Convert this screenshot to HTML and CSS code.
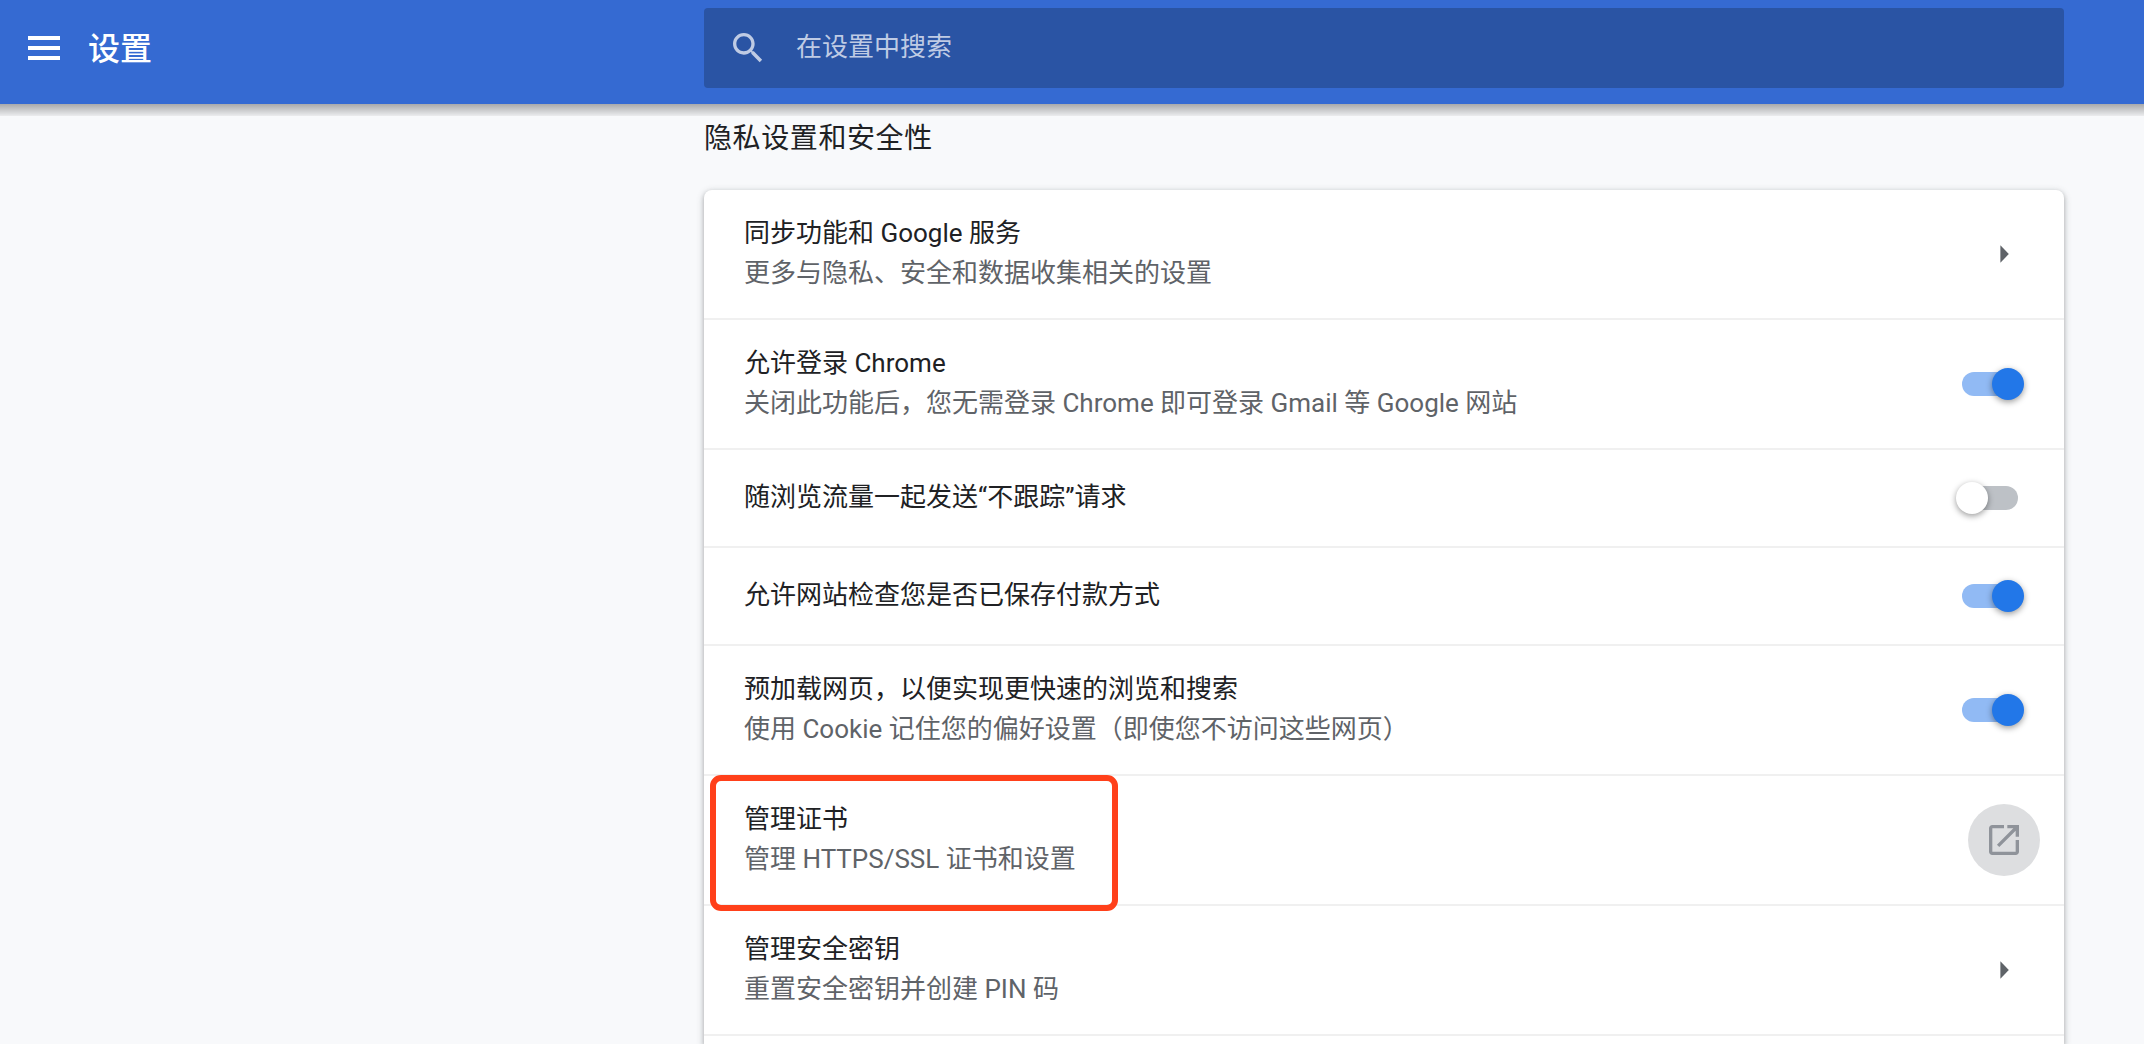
FILE: index.html
```html
<!DOCTYPE html>
<html lang="zh-CN">
<head>
<meta charset="utf-8">
<title>设置</title>
<link rel="stylesheet" href="styles.css">
</head>
<body>
<header class="toolbar">
  <div class="toolbar-left">
    <svg class="menu-icon" viewBox="0 0 32 24"><path d="M0 0h32v4H0zM0 10h32v4H0zM0 20h32v4H0z"/></svg>
    <h1 class="title">设置</h1>
  </div>
  <div class="search">
    <svg class="search-icon" viewBox="0 0 24 24"><path d="M15.5 14h-.79l-.28-.27C15.41 12.59 16 11.11 16 9.5 16 5.91 13.09 3 9.5 3S3 5.91 3 9.5 5.91 16 9.5 16c1.61 0 3.09-.59 4.23-1.57l.27.28v.79l5 4.99L20.49 19l-4.99-5zm-6 0C7.01 14 5 11.99 5 9.5S7.01 5 9.5 5 14 7.01 14 9.5 11.99 14 9.5 14z"/></svg>
    <span class="search-text">在设置中搜索</span>
  </div>
</header>
<main class="content">
  <h2 class="section-title">隐私设置和安全性</h2>
  <section class="card">
    <div class="row">
      <div class="label"><div>同步功能和 Google 服务</div><div class="secondary">更多与隐私、安全和数据收集相关的设置</div></div>
      <svg class="arrow" viewBox="0 0 9 18"><path d="M.4.3 8.8 9 .4 17.7z"/></svg>
    </div>
    <div class="row">
      <div class="label"><div>允许登录 Chrome</div><div class="secondary">关闭此功能后，您无需登录 Chrome 即可登录 Gmail 等 Google 网站</div></div>
      <div class="toggle on"><span class="knob"></span></div>
    </div>
    <div class="row single">
      <div class="label">随浏览流量一起发送“不跟踪”请求</div>
      <div class="toggle"><span class="knob"></span></div>
    </div>
    <div class="row single">
      <div class="label">允许网站检查您是否已保存付款方式</div>
      <div class="toggle on"><span class="knob"></span></div>
    </div>
    <div class="row">
      <div class="label"><div>预加载网页，以便实现更快速的浏览和搜索</div><div class="secondary">使用 Cookie 记住您的偏好设置（即使您不访问这些网页）</div></div>
      <div class="toggle on"><span class="knob"></span></div>
    </div>
    <div class="row marked">
      <div class="label"><div>管理证书</div><div class="secondary">管理 HTTPS/SSL 证书和设置</div></div>
      <div class="external">
        <svg viewBox="0 0 24 24"><path d="M19 19H5V5h7V3H5c-1.11 0-2 .9-2 2v14c0 1.1.89 2 2 2h14c1.1 0 2-.9 2-2v-7h-2v7zM14 3v2h3.59l-9.83 9.83 1.41 1.41L19 6.41V10h2V3h-7z"/></svg>
      </div>
    </div>
    <div class="row">
      <div class="label"><div>管理安全密钥</div><div class="secondary">重置安全密钥并创建 PIN 码</div></div>
      <svg class="arrow" viewBox="0 0 9 18"><path d="M.4.3 8.8 9 .4 17.7z"/></svg>
    </div>
    <div class="row last"></div>
  </section>
</main>
</body>
</html>
```
FILE: styles.css
```css
*, *::before, *::after { box-sizing: border-box; }

body {
  margin: 0;
  height: 1044px;
  overflow: hidden;
  background: #f8f9fb;
  color: #202124;
  font: 26px/40px Roboto, "Noto Sans CJK SC", sans-serif;
}

.toolbar {
  position: relative;
  display: flex;
  height: 104px;
  padding: 8px 80px 0 28px;
  background: #356ad2;
}

.toolbar::after {
  content: "";
  position: absolute;
  top: 100%;
  left: 0;
  right: 0;
  height: 12px;
  background: linear-gradient(rgba(0, 0, 0, .32), rgba(0, 0, 0, .05));
}

.toolbar-left {
  display: flex;
  align-items: center;
  gap: 28px;
  width: 676px;
  height: 80px;
}

.menu-icon { width: 32px; height: 24px; fill: #fff; }

.title {
  margin: 0;
  padding-top: 2px;
  color: #fff;
  font-size: 32px;
  font-weight: 500;
}

.search {
  display: flex;
  flex: 1;
  align-items: center;
  gap: 28px;
  height: 80px;
  padding-left: 24px;
  border-radius: 4px;
  background: #2a54a4;
  color: #bfcbe4;
}

.search-icon { width: 40px; height: 40px; fill: currentColor; }
.search-text { padding-bottom: 2px; }

.content {
  width: 1360px;
  margin-left: 704px;
}

.section-title {
  height: 86px;
  margin: 0;
  padding-top: 15px;
  font-size: 28px;
  font-weight: 400;
  letter-spacing: .6px;
}

.card {
  border-radius: 8px 8px 0 0;
  background: #fff;
  box-shadow: 0 2px 4px rgba(60, 64, 67, .3), 0 2px 6px 2px rgba(60, 64, 67, .15);
}

.row {
  position: relative;
  display: flex;
  align-items: center;
  justify-content: space-between;
  height: 130px;
  padding: 0 40px;
  border-top: 2px solid #f0f0f0;
}

.row:first-child { height: 128px; border-top: 0; }
.row.single { height: 98px; }
.row.last { height: 10px; }

.label { padding-bottom: 2px; }
.secondary { color: #5f6368; }

.arrow {
  width: 9px;
  height: 18px;
  margin-right: 15px;
  fill: #5f6368;
}

.toggle {
  width: 56px;
  height: 24px;
  margin-right: 6px;
  border-radius: 12px;
  background: #bdc1c6;
}

.knob {
  display: block;
  width: 32px;
  height: 32px;
  margin: -4px 0 0 -6px;
  border-radius: 50%;
  background: #fff;
  box-shadow: 0 2px 6px rgba(0, 0, 0, .4);
}

.toggle.on { background: #91baf4; }
.toggle.on .knob { margin-left: 30px; background: #2277e8; }

.external {
  display: flex;
  align-items: center;
  justify-content: center;
  width: 72px;
  height: 72px;
  margin-right: -16px;
  border-radius: 50%;
  background: #dddee0;
}

.external svg { width: 40px; height: 40px; fill: #8f939a; }

.marked::before {
  content: "";
  position: absolute;
  z-index: 1;
  top: -1px;
  left: 5.5px;
  width: 408px;
  height: 136px;
  border: 6px solid #ff401a;
  border-radius: 11px;
}
```
